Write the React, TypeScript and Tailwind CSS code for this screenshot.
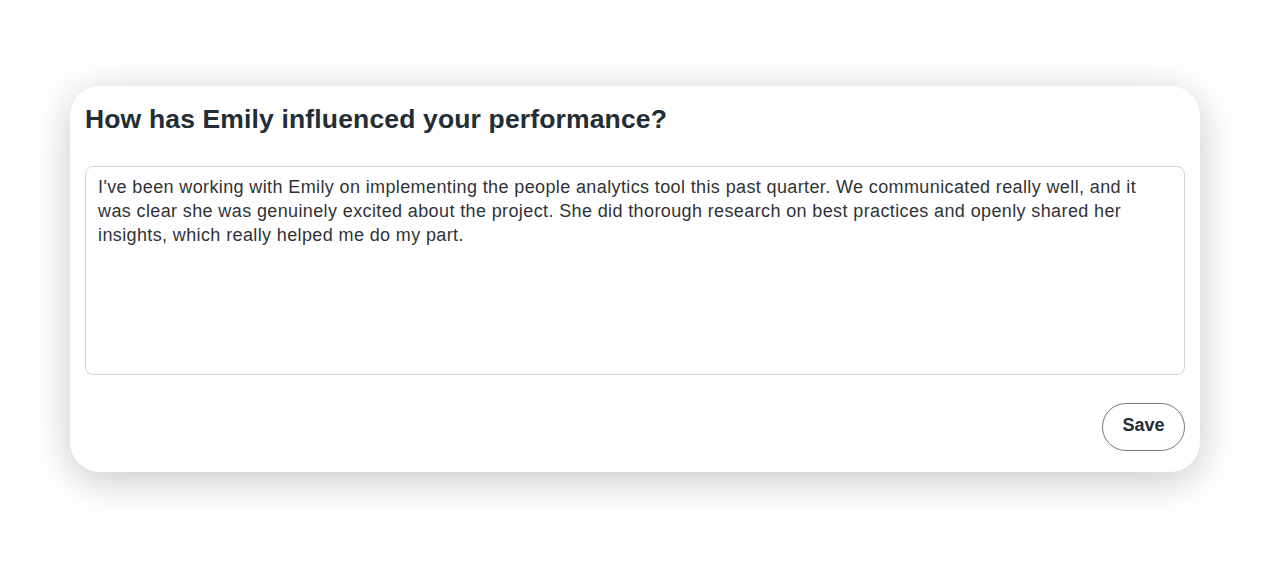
import React from "react";

export default function App() {
  return (
    <div className="w-[1270px] h-[568px] bg-white pt-[86px] pl-[70px]" style={{ fontFamily: '"Liberation Sans", Arial, sans-serif' }}>
      <div className="w-[1130px] h-[386px] bg-white rounded-[30px] shadow-[0_8px_40px_rgba(0,0,0,0.22)] px-[15px] pt-[17px] flex flex-col">
        <h1 className="text-[26.5px] font-bold text-[#232d36] leading-[32px] tracking-[0.15px]">
          How has Emily influenced your performance?
        </h1>
        <div className="mt-[31px] h-[209px] border border-[#cfd6dc] rounded-[8px] px-[12px] pt-[8px] text-[18px] leading-[24px] tracking-[0.38px] text-[#2f3338]">
          I've been working with Emily on implementing the people analytics tool this past quarter. We communicated really well, and it
          <br />
          was clear she was genuinely excited about the project. She did thorough research on best practices and openly shared her
          <br />
          insights, which really helped me do my part.
        </div>
        <div className="flex justify-end mt-[28px]">
          <button className="w-[83px] h-[48px] rounded-full border-[1.5px] border-[#6f7a83] text-[18px] font-bold text-[#232d36] bg-white pb-[3px]">
            Save
          </button>
        </div>
      </div>
    </div>
  );
}
